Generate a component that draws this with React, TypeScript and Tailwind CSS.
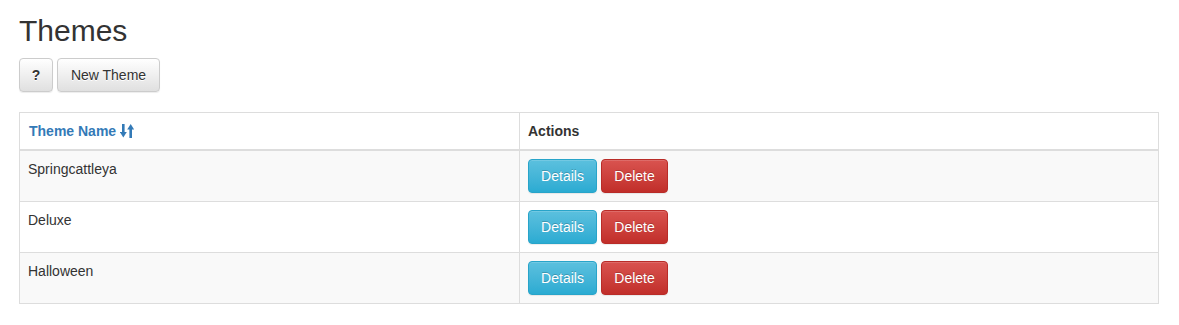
import React from "react";

const rows = ["Springcattleya", "Deluxe", "Halloween"];

function SortIcon() {
  return (
    <svg width="14" height="14" viewBox="0 0 14 14" className="inline-block ml-[4px] align-[-2px]" fill="#337ab7">
      <rect x="2" y="0" width="2.6" height="10" />
      <polygon points="-0.2,8 6.8,8 3.3,13.5" />
      <rect x="9.4" y="3.5" width="2.6" height="10.5" />
      <polygon points="7.2,5.5 14.2,5.5 10.7,0" />
    </svg>
  );
}

export default function App() {
  return (
    <div className="bg-white px-[19px] pt-[14px] pb-[20px] text-[14px] text-[#333] [font-family:'Liberation_Sans',Arial,sans-serif] leading-[20px]">
      <h2 className="text-[30px] leading-[33px] font-normal m-0 text-[#333]">Themes</h2>
      <div className="flex gap-[4px] mt-[11px]">
        <button className="h-[34px] w-[34px] rounded-[4px] border border-[#ccc] bg-gradient-to-b from-white to-[#e0e0e0] text-[#333] font-bold text-[14px] shadow-[0_1px_1px_rgba(0,0,0,0.075)] [text-shadow:0_1px_0_#fff]">
          ?
        </button>
        <button className="h-[34px] w-[103px] rounded-[4px] border border-[#ccc] bg-gradient-to-b from-white to-[#e0e0e0] text-[#333] text-[14px] shadow-[0_1px_1px_rgba(0,0,0,0.075)] [text-shadow:0_1px_0_#fff]">
          New Theme
        </button>
      </div>
      <table className="mt-[20px] w-[1140px] border-collapse border border-[#ddd]">
        <thead>
          <tr>
            <th className="w-[500px] text-left font-bold pl-[9px] pr-[8px] py-[8px] border border-[#ddd] border-b-2 align-bottom">
              <a className="text-[#337ab7]">
                Theme Name
                <SortIcon />
              </a>
            </th>
            <th className="text-left font-bold p-[8px] border border-[#ddd] border-b-2 align-bottom">Actions</th>
          </tr>
        </thead>
        <tbody>
          {rows.map((name, i) => (
            <tr key={name} className={i % 2 === 0 ? "bg-[#f9f9f9]" : "bg-white"}>
              <td className="p-[8px] border border-[#ddd] align-top">{name}</td>
              <td className="p-[8px] border border-[#ddd] align-top">
                <div className="flex gap-[4px]">
                  <button className="h-[34px] w-[69px] rounded-[4px] border border-[#28a4c9] bg-gradient-to-b from-[#5bc0de] to-[#2aabd2] text-white text-[14px] [text-shadow:0_-1px_0_rgba(0,0,0,0.2)] shadow-[inset_0_1px_0_rgba(255,255,255,0.15),0_1px_1px_rgba(0,0,0,0.075)]">
                    Details
                  </button>
                  <button className="h-[34px] w-[67px] rounded-[4px] border border-[#b92c28] bg-gradient-to-b from-[#d9534f] to-[#c12e2a] text-white text-[14px] [text-shadow:0_-1px_0_rgba(0,0,0,0.2)] shadow-[inset_0_1px_0_rgba(255,255,255,0.15),0_1px_1px_rgba(0,0,0,0.075)]">
                    Delete
                  </button>
                </div>
              </td>
            </tr>
          ))}
        </tbody>
      </table>
    </div>
  );
}
